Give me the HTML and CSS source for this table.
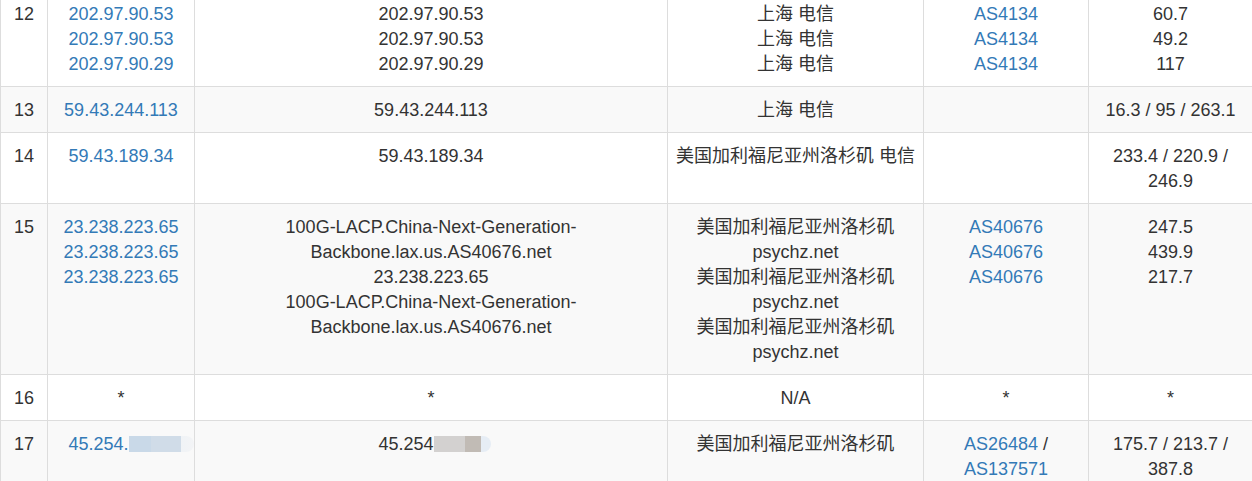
FILE: index.html
```html
<!DOCTYPE html>
<html lang="zh-CN">
<head>
<meta charset="utf-8">
<title>Traceroute</title>
<link rel="stylesheet" href="styles.css">
</head>
<body>
<div class="wrap">
<table class="trace">
  <colgroup>
    <col class="c-hop"><col class="c-ip"><col class="c-host"><col class="c-geo"><col class="c-as"><col class="c-rtt">
  </colgroup>
  <tbody>
    <tr>
      <td>12</td>
      <td><a class="lnk">202.97.90.53</a><br><a class="lnk">202.97.90.53</a><br><a class="lnk">202.97.90.29</a></td>
      <td>202.97.90.53<br>202.97.90.53<br>202.97.90.29</td>
      <td>上海 电信<br>上海 电信<br>上海 电信</td>
      <td><a class="lnk">AS4134</a><br><a class="lnk">AS4134</a><br><a class="lnk">AS4134</a></td>
      <td>60.7<br>49.2<br>117</td>
    </tr>
    <tr>
      <td>13</td>
      <td><a class="lnk">59.43.244.113</a></td>
      <td>59.43.244.113</td>
      <td>上海 电信</td>
      <td></td>
      <td>16.3 / 95 / 263.1</td>
    </tr>
    <tr>
      <td>14</td>
      <td><a class="lnk">59.43.189.34</a></td>
      <td>59.43.189.34</td>
      <td class="nowrap">美国加利福尼亚州洛杉矶 电信</td>
      <td></td>
      <td>233.4 / 220.9 /<br>246.9</td>
    </tr>
    <tr>
      <td>15</td>
      <td><a class="lnk">23.238.223.65</a><br><a class="lnk">23.238.223.65</a><br><a class="lnk">23.238.223.65</a></td>
      <td>100G-LACP.China-Next-Generation-<br>Backbone.lax.us.AS40676.net<br>23.238.223.65<br>100G-LACP.China-Next-Generation-<br>Backbone.lax.us.AS40676.net</td>
      <td>美国加利福尼亚州洛杉矶<br>psychz.net<br>美国加利福尼亚州洛杉矶<br>psychz.net<br>美国加利福尼亚州洛杉矶<br>psychz.net</td>
      <td><a class="lnk">AS40676</a><br><a class="lnk">AS40676</a><br><a class="lnk">AS40676</a></td>
      <td>247.5<br>439.9<br>217.7</td>
    </tr>
    <tr>
      <td>16</td>
      <td>*</td>
      <td>*</td>
      <td>N/A</td>
      <td>*</td>
      <td>*</td>
    </tr>
    <tr>
      <td>17</td>
      <td><a class="lnk">45.254.</a><span class="blur blur-blue"></span></td>
      <td>45.254<span class="blur blur-gray"></span></td>
      <td>美国加利福尼亚州洛杉矶</td>
      <td><a class="lnk">AS26484</a> /<br><a class="lnk">AS137571</a></td>
      <td>175.7 / 213.7 /<br>387.8</td>
    </tr>
  </tbody>
</table>
</div>
</body>
</html>
```

FILE: styles.css
```css
html, body {
  margin: 0;
  padding: 0;
  background: #ffffff;
  overflow: hidden;
}

.wrap {
  margin-top: -10px;
}

.trace {
  width: 1252px;
  table-layout: fixed;
  border-collapse: collapse;
  font-family: "Liberation Sans", "Noto Sans CJK SC", sans-serif;
  font-size: 18px;
  line-height: 25px;
  color: #333333;
}

.c-hop { width: 47px; }
.c-ip { width: 147px; }
.c-host { width: 473px; }
.c-geo { width: 256px; }
.c-as { width: 165px; }
.c-rtt { width: 164px; }

.trace td {
  border: 1px solid #dddddd;
  padding: 11px 8px 9px;
  text-align: center;
  vertical-align: top;
}

.trace tr:nth-child(even) td {
  background: #f9f9f9;
}

.nowrap {
  white-space: nowrap;
}

.lnk {
  color: #337ab7;
  text-decoration: none;
}

.blur {
  display: inline-block;
  height: 16px;
  vertical-align: -2px;
  border-radius: 0 8px 8px 0;
}

.blur-blue {
  width: 65px;
  margin-right: -20px;
  background: linear-gradient(to right, #c9d9e8 0, #c9d9e8 22px, #d0dce8 22px, #d0dce8 52px, #f0f3f6 52px, #f3f4f6 65px);
}

.blur-gray {
  width: 57px;
  margin-right: -7px;
  background: linear-gradient(to right, #d3d1d0 0, #d3d1d0 31px, #c1bbb5 31px, #c1bbb5 47px, #e6edf5 47px, #e6edf5 57px);
}
```
